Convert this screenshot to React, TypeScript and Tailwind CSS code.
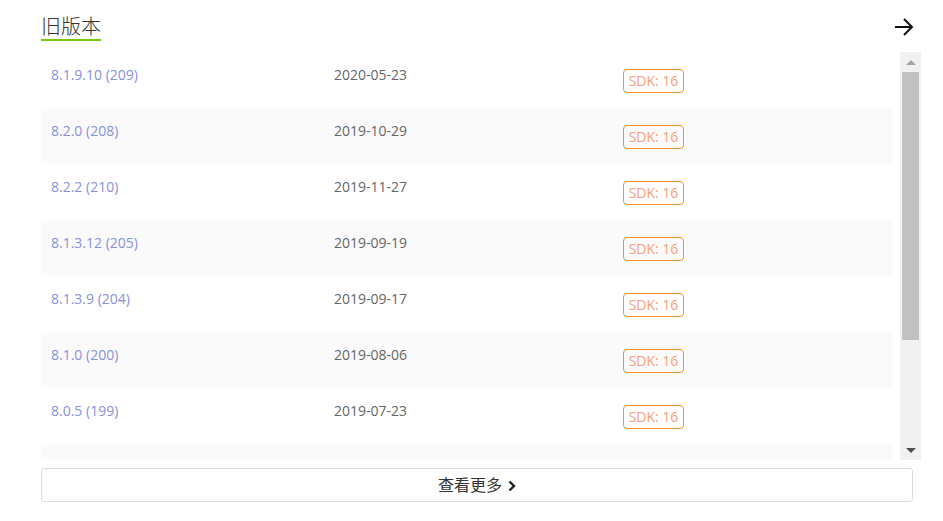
type Version = {
  name: string;
  date: string;
  sdk: number;
};

const versions: Version[] = [
  { name: "8.1.9.10 (209)", date: "2020-05-23", sdk: 16 },
  { name: "8.2.0 (208)", date: "2019-10-29", sdk: 16 },
  { name: "8.2.2 (210)", date: "2019-11-27", sdk: 16 },
  { name: "8.1.3.12 (205)", date: "2019-09-19", sdk: 16 },
  { name: "8.1.3.9 (204)", date: "2019-09-17", sdk: 16 },
  { name: "8.1.0 (200)", date: "2019-08-06", sdk: 16 },
  { name: "8.0.5 (199)", date: "2019-07-23", sdk: 16 },
];

export default function App() {
  return (
    <div
      className="w-[943px] h-[521px] bg-white overflow-hidden"
      style={{ fontFamily: '"Open Sans", "Noto Sans CJK SC", sans-serif' }}
    >
      <div className="pl-[41px] pr-[30px]">
        {/* header */}
        <div className="flex items-start justify-between h-[52px] pt-[15px]">
          <div>
            <h2 className="text-[20px] leading-[23px] text-[#333] font-light">旧版本</h2>
            <div className="mt-[1px] h-[2px] w-[60px] bg-[#7cc510]" />
          </div>
          <svg width="20" height="20" viewBox="0 0 20 20" className="mt-[2px] -mr-[1px]">
            <path d="M1 10 H18 M10 2 L18 10 L10 18" fill="none" stroke="#111" strokeWidth="2" />
          </svg>
        </div>

        {/* list with scrollbar */}
        <div className="flex h-[408px] w-[880px]">
          <div className="w-[851px] overflow-hidden">
            {versions.map((v, i) => (
              <div
                key={v.name}
                className={`h-[56px] grid grid-cols-[293px_289px_1fr] ${
                  i % 2 === 1 ? "bg-[#fafafa]" : "bg-white"
                }`}
              >
                <div className="pl-[10px] pt-[13px] text-[14px] leading-[20px] text-[#8891d8]">
                  {v.name}
                </div>
                <div className="pt-[13px] text-[14px] leading-[20px] text-[#666]">{v.date}</div>
                <div className="pt-[16px]">
                  <span className="inline-flex items-center justify-center h-[24px] w-[61px] border border-[#f5932a] rounded-[4px] text-[14px] text-[#f8a07e]">
                    SDK: {v.sdk}
                  </span>
                </div>
              </div>
            ))}
            {/* next row, scrolled out of view */}
            <div className="h-[56px] grid grid-cols-[293px_289px_1fr] bg-[#fafafa]">
              <div />
              <div />
              <div className="pt-[16px]">
                <span className="block h-[24px] w-[61px] border border-[#f5932a] rounded-[4px]" />
              </div>
            </div>
          </div>
          <div className="ml-[8px] w-[21px] bg-[#f1f1f1] flex flex-col items-center">
            <div className="h-[20px] flex items-center justify-center">
              <div className="w-0 h-0 border-l-[5px] border-r-[5px] border-b-[5px] border-l-transparent border-r-transparent border-b-[#a3a3a3]" />
            </div>
            <div className="w-[17px] h-[268px] bg-[#c1c1c1]" />
            <div className="flex-1" />
            <div className="h-[20px] flex items-center justify-center">
              <div className="w-0 h-0 border-l-[5px] border-r-[5px] border-t-[5px] border-l-transparent border-r-transparent border-t-[#505050]" />
            </div>
          </div>
        </div>

        {/* more button */}
        <button
          type="button"
          className="mt-[8px] w-[872px] h-[34px] border border-[#dddddd] rounded-[3px] flex items-center justify-center gap-[6px] text-[16px] text-[#333]"
        >
          <span>查看更多</span>
          <svg width="8" height="12" viewBox="0 0 8 12" className="mt-[1px]">
            <path d="M1.5 1.5 L6 6 L1.5 10.5" fill="none" stroke="#222" strokeWidth="2.4" />
          </svg>
        </button>
      </div>
    </div>
  );
}
